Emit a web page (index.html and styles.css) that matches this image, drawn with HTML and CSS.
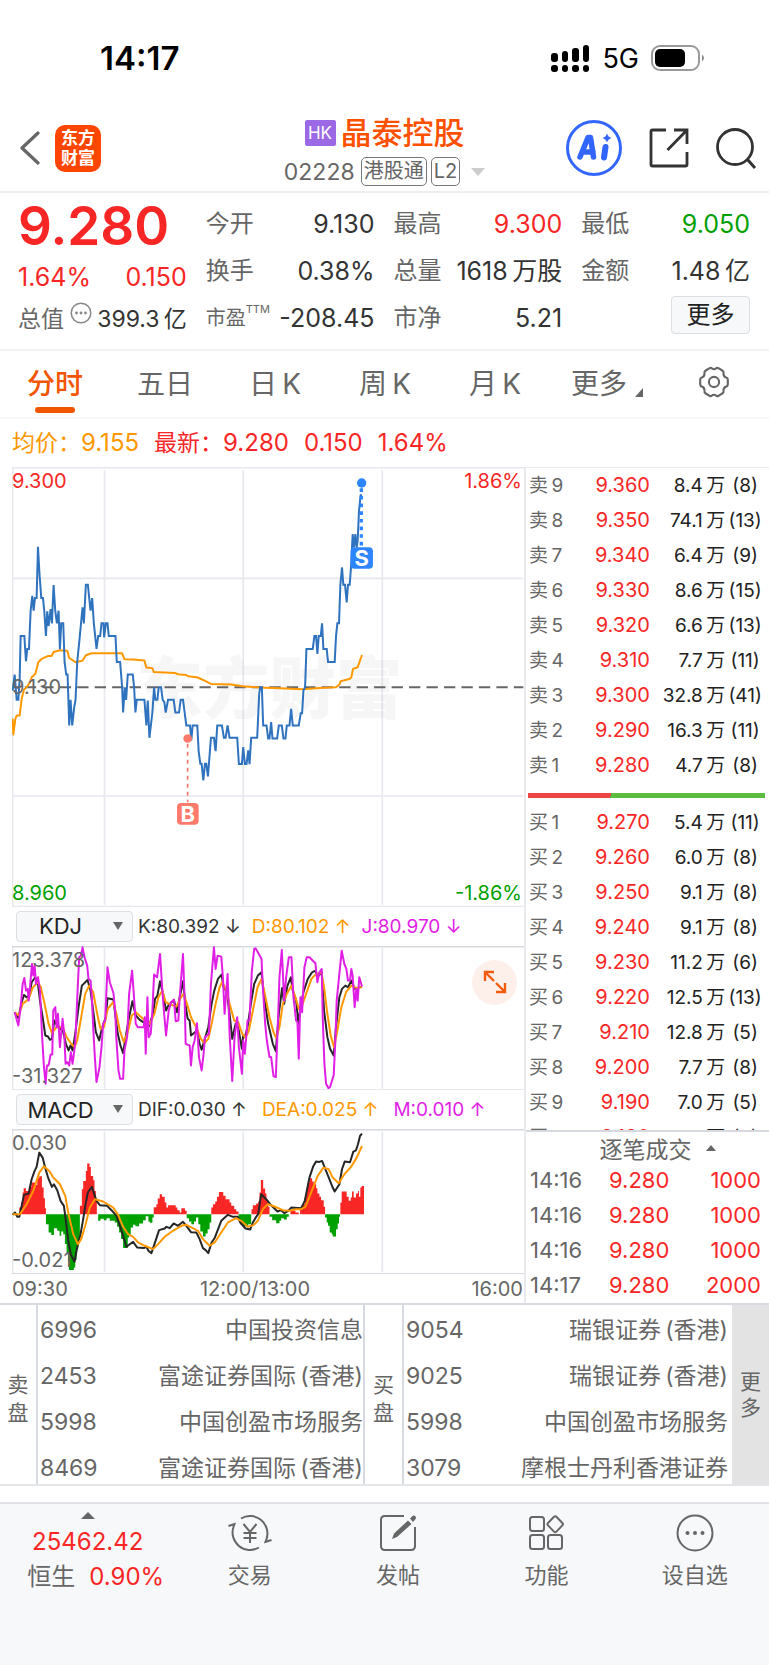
FILE: index.html
```html
<!DOCTYPE html>
<html lang="zh-CN">
<head>
<meta charset="utf-8">
<meta name="viewport" content="width=device-width, initial-scale=1">
<title>晶泰控股 02228</title>
<link rel="stylesheet" href="styles.css">
</head>
<body>
<div class="status">
  <span class="clock">14:17</span>
  <div class="status-right">
    <svg width="39" height="28" viewBox="0 0 39 28" aria-hidden="true"><g fill="#000"><rect x="0" y="9" width="7" height="9" rx="3"/><rect x="11" y="7" width="6" height="11" rx="3"/><rect x="21" y="4" width="7" height="14" rx="3"/><rect x="32" y="1" width="6" height="17" rx="3"/><rect x="0" y="21" width="7" height="7" rx="3"/><rect x="11" y="21" width="6" height="7" rx="3"/><rect x="21" y="21" width="7" height="7" rx="3"/><rect x="32" y="21" width="6" height="7" rx="3"/></g></svg>
    <span class="net">5G</span>
    <svg width="54" height="26" viewBox="0 0 54 26" aria-hidden="true"><rect x="1" y="1" width="47" height="24" rx="8" fill="none" stroke="#999" stroke-width="2"/><rect x="4" y="4" width="30" height="18" rx="5" fill="#000"/><path d="M51 9.500q4 3.500 0 7z" fill="#888"/></svg>
  </div>
</div>

<header class="head">
  <div class="head-left">
    <button class="icon-btn" aria-label="返回"><svg width="20" height="34" viewBox="0 0 20 34"><path d="M18 2 2 17l16 15" fill="none" stroke="#666" stroke-width="3.200" stroke-linecap="round" stroke-linejoin="round"/></svg></button>
    <div class="logo"><span>东方</span><span>财富</span></div>
  </div>
  <div class="title">
    <div class="title-row"><span class="hk">HK</span><h1>晶泰控股</h1></div>
    <button class="code-row"><span class="code">02228</span><span class="tag">港股通</span><span class="tag">L2</span><svg width="14" height="8" viewBox="0 0 14 8"><path d="M0 0h14L7 8z" fill="#ccc"/></svg></button>
  </div>
  <div class="head-right">
    <button class="icon-btn" aria-label="AI"><svg width="56" height="56" viewBox="0 0 56 56"><circle cx="28" cy="28" r="26.500" fill="none" stroke="#3366ff" stroke-width="3"/><g fill="none" stroke="#3366ff" stroke-linecap="round" stroke-linejoin="round"><path d="M14 37 22 17.500h2.500l3 19.500M17 32h10" stroke-width="5.500"/><path d="M39.500 27 38 37.500" stroke-width="6"/></g><path d="M41 13.500q1 3.500 4.500 4.500-3.500 1-4.500 4.500-1-3.500-4.500-4.500 3.500-1 4.500-4.500z" fill="#3366ff"/></svg></button>
    <button class="icon-btn" aria-label="分享"><svg width="40" height="40" viewBox="0 0 40 40"><path d="M17 2H3.500Q2 2 2 3.500v33Q2 38 3.500 38h33q1.500 0 1.500-1.500V24M25 2h13v14M38 2 18.500 22" fill="none" stroke="#333" stroke-width="2.800"/></svg></button>
    <button class="icon-btn" aria-label="搜索"><svg width="41" height="41" viewBox="0 0 41 41"><circle cx="19" cy="19" r="17.500" fill="none" stroke="#333" stroke-width="2.800"/><path d="m31 31 8 9" stroke="#333" stroke-width="3"/></svg></button>
  </div>
</header>

<section class="quote">
  <div class="now">
    <div class="price">9.280</div>
    <div class="pair chg"><span>1.64%</span><span>0.150</span></div>
    <div class="pair cap"><span class="lab">总值</span><svg width="22" height="22" viewBox="0 0 22 22"><circle cx="11" cy="11" r="9.800" fill="none" stroke="#888" stroke-width="1.500"/><g fill="#888"><circle cx="6.500" cy="11" r="1.400"/><circle cx="11" cy="11" r="1.400"/><circle cx="15.500" cy="11" r="1.400"/></g></svg><span class="val">399.3&#8201;亿</span></div>
  </div>
  <dl class="stats">
    <div><dt>今开</dt><dd>9.130</dd></div>
    <div><dt>换手</dt><dd>0.38%</dd></div>
    <div><dt class="small">市盈<sup>TTM</sup></dt><dd>-208.45</dd></div>
  </dl>
  <dl class="stats">
    <div><dt>最高</dt><dd class="up">9.300</dd></div>
    <div><dt>总量</dt><dd>1618&#8201;万股</dd></div>
    <div><dt>市净</dt><dd>5.21</dd></div>
  </dl>
  <div class="stats">
    <dl>
      <div><dt>最低</dt><dd class="down">9.050</dd></div>
      <div><dt>金额</dt><dd>1.48&#8201;亿</dd></div>
    </dl>
    <div class="more-row"><button class="more">更多</button></div>
  </div>
</section>

<nav class="tabs">
  <button class="tab on">分时</button>
  <button class="tab">五日</button>
  <button class="tab">日&#8201;K</button>
  <button class="tab">周&#8201;K</button>
  <button class="tab">月&#8201;K</button>
  <button class="tab wide">更多<svg width="8" height="9" viewBox="0 0 8 9"><path d="M8 0v9H0z" fill="#666"/></svg></button>
  <button class="tab" aria-label="设置"><svg width="34" height="34" viewBox="0 0 32 32"><g fill="none" stroke="#666" stroke-width="2"><path d="M11.500 3.200Q13 2 14 3.200q2 1.600 4 0 1-1.200 2.500 0l3.300 2q1.500.9 1.200 2.600-.3 2.600 2 3.700 2 .7 2 2.200v4.600q0 1.500-2 2.200-2.300 1.100-2 3.700.3 1.700-1.200 2.600l-3.300 2q-1.500 1.200-2.500 0-2-1.600-4 0-1 1.200-2.500 0l-3.300-2Q6.700 25.900 7 24.200q.3-2.600-2-3.700-2-.7-2-2.200v-4.600q0-1.500 2-2.200 2.300-1.100 2-3.700-.3-1.700 1.200-2.600z"/><circle cx="16" cy="16" r="4.800"/></g></svg></button>
</nav>

<div class="legend"><span class="avg">均价：<b>9.155</b></span><span>最新：<b>9.280</b></span><b>0.150</b><b>1.64%</b></div>

<main class="board">
  <div class="charts">
    <div class="chart">
      <svg viewBox="36 18 1539 1322" role="img" aria-label="分时走势">
        <g fill="none" stroke="#e6e8ee" stroke-width="5"><path d="M36 20H1575M36 1339H1575M38 20V1339"/><path d="M38 353H1573M38 1007H1573M314 28V1334M731 28V1334M1149 28V1334"/></g>
        <text class="mark" x="410" y="758">东方财富</text>
        <path d="M38 680H1573" stroke="#666" stroke-width="6" stroke-dasharray="34 18.500" stroke-dashoffset="16" fill="none"/>
        <polyline fill="none" stroke="#ff9800" stroke-width="6" stroke-linejoin="round" points="38,775 40,822 46,775 50,765 59,765 65,715 72,687 80,680 90,665 95,650 106,640 115,605 125,595 145,586 155,586 161,574 180,569 202,570 208,592 220,600 227,605 248,600 258,584 275,578 367,578 374,596 400,597 434,600 440,621 458,623 462,634 525,637 535,641 560,643 565,647 592,650 615,660 634,670 695,672 730,677 780,681 860,684 910,686 960,682 1010,680 1020,672 1024,662 1050,655 1056,650 1061,625 1075,620 1088,583"/>
        <polyline fill="none" stroke="#2f73bf" stroke-width="6" points="38,690 44,642 50,718 55,718 59,655 62,526 73,526 78,602 82,565 87,565 92,450 97,405 101,450 105,412 110,412 114,258 119,345 124,412 129,412 133,450 138,526 142,452 146,496 152,445 156,488 161,373 166,450 171,488 176,450 180,566 184,488 190,488 194,604 199,642 203,642 208,795 212,718 217,795 223,740 227,718 232,604 238,545 248,440 252,488 258,372 264,372 272,450 277,412 282,488 290,565 295,526 301,526 305,488 311,488 313,530 318,488 323,488 327,526 347,526 351,604 361,604 367,680 370,756 375,680 379,718 384,642 399,642 403,680 407,756 411,718 434,718 440,795 444,720 449,832 458,756 463,680 467,718 473,718 477,680 484,680 489,718 494,725 498,756 505,718 522,718 527,756 538,756 543,718 550,718 560,795 571,795 575,840 579,795 593,795 597,872 602,910 606,910 611,960 616,910 620,910 625,948 634,832 643,832 648,872 653,795 667,795 673,832 678,832 684,795 690,832 713,832 718,911 727,911 731,860 736,911 741,911 746,870 750,911 755,832 773,832 779,700 782,680 787,680 791,795 801,795 806,834 810,834 815,785 819,834 833,834 838,795 847,795 852,834 858,834 862,795 870,795 875,745 880,795 898,795 904,758 908,758 912,690 917,680 921,565 940,565 945,526 950,526 954,580 958,526 964,526 968,488 972,565 982,565 986,604 1006,604 1010,526 1014,488 1019,488 1023,372 1028,320 1032,372 1037,372 1042,425 1046,372 1051,372 1055,320 1060,220 1064,260 1068,220 1072,260 1075,240 1079,150 1084,103 1088,103"/>
        <path d="M564 850V1026" stroke="#ff7a6b" stroke-width="5" stroke-dasharray="12 12"/>
        <circle cx="564" cy="834" r="13" fill="#ff7a6b"/>
        <rect x="532" y="1028" width="65" height="65" rx="12" fill="#ff7a6b"/>
        <text class="pin" x="564.500" y="1084">B</text>
        <path d="M1086 82V258" stroke="#2d86ff" stroke-width="10" stroke-dasharray="11 12"/>
        <circle cx="1087" cy="66" r="14" fill="#2d86ff"/>
        <rect x="1054" y="259" width="67" height="65" rx="12" fill="#2d86ff"/>
        <text class="pin" x="1087.500" y="315">S</text>
      </svg>
      <span class="scale tl up">9.300</span><span class="scale tr up">1.86%</span>
      <span class="scale ml">9.130</span>
      <span class="scale bl down">8.960</span><span class="scale br down">-1.86%</span>
    </div>
    <div class="ind">
      <span class="pick"><select aria-label="指标一"><option>KDJ</option></select><svg width="10" height="8" viewBox="0 0 10 8"><path d="M0 0h10L5 8z" fill="#666"/></svg></span>
      <div class="vals"><span>K:80.392 ↓</span><span class="c-o">D:80.102 ↑</span><span class="c-m">J:80.970 ↓</span></div>
    </div>
    <div class="chart">
      <svg viewBox="36 136 1539 434" role="img" aria-label="KDJ">
        <g fill="none" stroke="#e6e8ee" stroke-width="5"><path d="M36 568H1575M38 138V568M314 142V565M731 142V565M1149 142V565"/><path d="M36 138H1575" stroke="#d6d9e0"/></g>
        <g fill="none" stroke-width="6" stroke-linejoin="round">
        <polyline stroke="#262626" points="44,335 55,352 65,305 72,283 80,290 88,285 95,245 106,230 114,250 120,300 128,350 136,405 144,408 150,418 156,415 163,360 170,372 178,380 190,395 198,430 206,450 212,435 218,450 226,400 236,320 246,255 263,238 272,270 280,330 288,395 298,420 306,385 318,350 323,293 341,297 346,340 354,400 362,435 370,458 376,420 388,350 398,302 408,345 420,358 435,368 447,378 460,340 466,295 473,285 481,242 490,280 499,330 507,312 523,300 532,335 540,290 550,242 557,310 564,355 570,360 574,405 592,390 600,430 606,448 614,420 626,380 636,310 644,270 655,235 666,222 672,260 682,275 690,340 698,415 708,370 716,380 727,445 731,405 736,410 744,380 754,310 764,250 775,225 786,215 794,290 806,370 820,430 829,452 838,340 848,262 854,310 864,255 874,230 880,270 890,300 897,370 903,320 912,275 925,235 938,215 948,210 955,228 967,215 974,330 984,410 992,445 1003,465 1010,380 1020,290 1028,265 1038,255 1046,260 1056,240 1066,265 1088,258"/>
        <polyline stroke="#ff9800" points="44,335 56,345 68,310 86,295 98,262 112,245 122,258 134,310 146,370 156,398 170,380 188,380 200,410 214,430 224,440 232,420 244,350 256,280 268,255 280,275 292,340 302,385 312,380 324,325 340,305 350,340 360,390 372,425 384,395 396,345 408,335 430,355 450,370 464,340 476,290 488,270 498,305 512,312 530,318 544,290 552,280 562,310 574,350 592,385 604,415 614,428 626,415 636,370 648,310 660,260 668,243 680,270 690,310 704,360 716,365 728,400 738,412 748,390 760,330 774,260 786,235 796,280 810,350 822,395 830,412 840,380 850,310 862,280 876,255 888,290 898,325 908,315 920,280 936,235 948,222 966,215 974,260 984,340 994,405 1004,440 1014,390 1026,320 1040,275 1056,255 1070,262 1088,260"/>
        <polyline stroke="#e01ee6" points="44,335 55,375 62,320 68,250 73,232 78,270 83,265 86,300 90,260 96,190 100,225 104,195 108,250 114,230 120,270 126,400 132,500 137,550 141,495 146,495 152,462 157,462 160,330 166,320 170,380 174,340 180,440 188,355 193,400 197,490 202,485 208,495 213,455 218,490 226,430 234,250 238,170 243,165 248,140 254,170 262,195 266,235 272,240 276,290 280,380 285,470 290,545 299,500 305,440 310,370 316,360 323,200 330,245 341,278 346,330 350,420 356,510 361,535 370,535 374,450 382,410 388,280 397,210 402,280 408,370 414,380 432,380 435,350 438,460 443,290 447,410 453,400 458,330 463,222 472,230 481,160 486,240 490,300 499,405 507,330 514,305 523,297 528,362 536,360 540,290 550,160 555,300 558,430 570,435 574,495 579,440 585,420 592,368 598,470 606,510 612,460 616,410 628,400 634,250 643,140 648,205 654,165 665,168 670,230 675,340 684,220 690,400 698,542 705,410 713,350 718,440 727,520 731,420 736,460 744,360 750,360 757,210 764,145 768,143 775,155 786,175 790,260 797,370 802,420 810,470 815,470 822,527 829,530 834,400 840,230 847,148 854,300 860,230 868,170 876,170 882,290 890,360 894,365 898,475 903,290 908,335 915,200 922,170 930,170 948,188 954,245 960,215 967,205 970,350 975,490 980,550 987,563 992,560 1003,525 1008,420 1012,300 1018,240 1027,150 1035,190 1041,205 1046,240 1052,240 1056,205 1060,225 1066,320 1071,265 1075,300 1080,230 1088,258"/>
        </g>
      </svg>
      <span class="scale tl">123.378</span><span class="scale bl">-31.327</span>
      <button class="expand" aria-label="全屏"><svg width="24" height="24" viewBox="0 0 24 24"><path d="M11 2H2v9M2 2l9 9M22 13v9h-9M22 22l-9-9" fill="none" stroke="#f25c10" stroke-width="2.400"/></svg></button>
    </div>
    <div class="ind">
      <span class="pick"><select aria-label="指标二"><option>MACD</option></select><svg width="10" height="8" viewBox="0 0 10 8"><path d="M0 0h10L5 8z" fill="#666"/></svg></span>
      <div class="vals loose"><span>DIF:0.030 ↑</span><span class="c-o">DEA:0.025 ↑</span><span class="c-m">M:0.010 ↑</span></div>
    </div>
    <div class="chart">
      <svg viewBox="36 114 1539 436" role="img" aria-label="MACD">
        <g fill="none" stroke="#e6e8ee" stroke-width="5"><path d="M38 116V548M314 122V543M731 122V543M1149 122V543"/><path d="M36 116H1575M36 549H1575" stroke="#d6d9e0"/></g>
        <path class="bar-up" d="M58 370V350H63V335H68V305H71V292H78V300H88V288H94V275H108V282H112V262H118V256H126V290H131V322H135V352H138V370ZM240 370V345H246V295H250V270H258V240H262V218H269V228H273V255H280V268H284V300H288V330H291V370ZM462 370V349H470V340H474V323H480V310H487V318H495V335H500V350H505V343H528V350H533V358H540V365H545V352H556V360H561V370ZM635 370V350H640V340H647V332H652V318H658V303H671V315H678V325H690V335H695V345H704V355H710V362H717V370ZM756 370V355H760V343H770V338H776V332H780V305H784V267H791V293H797V308H801V330H806V348H810V370ZM873 370V360H888V365H898V370ZM902 370V350H908V340H916V320H920V298H925V275H930V262H938V272H943V280H950V292H954V308H960V318H965V328H973V348H977V370ZM1023 370V335H1027V302H1042V318H1048V330H1054V320H1058V302H1063V320H1070V308H1076V300H1079V318H1083V290H1087V285H1094V370Z"/>
        <path class="bar-dn" d="M138 370V400H146V425H154V433H162V412H172V420H179V435H184V422H190V430H195V460H200V488H205V510H207V538H222V530H226V508H230V475H235V450H240V370ZM295 370V390H302V384H312V388H320V382H330V390H345V395H352V408H358V425H364V445H370V472H384V440H388V430H393V410H400V402H407V406H418V398H430V388H438V376H446V392H450V396H458V380H462V370ZM561 370V382H568V392H575V400H583V392H589V380H596V400H602V422H610V437H618V428H624V415H630V395H635V370ZM717 370V388H722V400H728V406H746V400H755V370ZM810 370V378H818V388H830V397H840V390H845V382H853V386H862V378H868V370ZM977 370V380H982V395H986V405H991V425H997V430H1000V437H1010V415H1015V398H1019V378H1022V370Z"/>
      </svg>
      <span class="scale tl">0.030</span><span class="scale bl">-0.021</span>
      <svg class="over" viewBox="36 114 1539 436" aria-hidden="true">
        <g fill="none" stroke-width="6" stroke-linejoin="round">
        <polyline stroke="#262626" points="38,372 45,365 52,378 58,378 64,350 72,312 86,308 95,265 104,240 110,228 118,185 128,200 137,235 145,262 156,288 162,280 172,298 182,330 192,345 198,390 205,450 213,492 224,513 232,470 242,430 250,385 258,335 264,305 276,288 290,330 300,343 322,345 335,358 350,375 362,410 380,468 400,453 412,470 432,472 440,468 446,480 455,487 466,455 478,418 495,413 500,408 510,412 522,398 535,405 550,393 560,405 574,424 590,425 600,445 610,472 618,478 626,487 636,455 646,440 665,390 685,372 700,378 715,378 722,395 738,413 752,416 760,395 770,378 776,370 785,310 800,325 812,340 834,362 845,358 855,367 866,360 876,350 905,352 916,330 930,260 942,225 950,212 960,213 968,210 978,235 990,265 1000,290 1006,302 1020,280 1028,235 1036,212 1052,214 1062,182 1070,178 1076,160 1082,135 1088,128"/>
        <polyline stroke="#ff9800" points="38,370 60,370 80,340 100,300 118,245 132,226 148,240 160,260 180,280 196,315 206,370 220,430 234,460 244,445 256,405 270,350 285,325 310,332 340,350 355,372 370,408 385,430 400,438 415,455 435,465 460,475 475,460 495,438 520,420 545,405 560,402 575,410 595,420 610,445 630,465 645,455 665,425 685,395 710,382 725,390 745,408 762,403 775,390 790,355 805,340 825,347 850,358 870,360 890,355 905,355 918,348 935,305 955,255 972,230 988,235 1000,260 1018,277 1035,250 1055,228 1072,200 1088,165"/>
        </g>
      </svg>
    </div>
    <div class="axis"><span>09:30</span><span>12:00/13:00</span><span>16:00</span></div>
  </div>

  <aside class="side">
    <div class="book">
      <table>
        <tr><th>卖&#8201;9</th><td>9.360</td><td>8.4&#8201;万</td><td>(8)</td></tr>
        <tr><th>卖&#8201;8</th><td>9.350</td><td>74.1&#8201;万</td><td>(13)</td></tr>
        <tr><th>卖&#8201;7</th><td>9.340</td><td>6.4&#8201;万</td><td>(9)</td></tr>
        <tr><th>卖&#8201;6</th><td>9.330</td><td>8.6&#8201;万</td><td>(15)</td></tr>
        <tr><th>卖&#8201;5</th><td>9.320</td><td>6.6&#8201;万</td><td>(13)</td></tr>
        <tr><th>卖&#8201;4</th><td>9.310</td><td>7.7&#8201;万</td><td>(11)</td></tr>
        <tr><th>卖&#8201;3</th><td>9.300</td><td>32.8&#8201;万</td><td>(41)</td></tr>
        <tr><th>卖&#8201;2</th><td>9.290</td><td>16.3&#8201;万</td><td>(11)</td></tr>
        <tr><th>卖&#8201;1</th><td>9.280</td><td>4.7&#8201;万</td><td>(8)</td></tr>
      </table>
      <div class="ratio"></div>
      <table>
        <tr><th>买&#8201;1</th><td>9.270</td><td>5.4&#8201;万</td><td>(11)</td></tr>
        <tr><th>买&#8201;2</th><td>9.260</td><td>6.0&#8201;万</td><td>(8)</td></tr>
        <tr><th>买&#8201;3</th><td>9.250</td><td>9.1&#8201;万</td><td>(8)</td></tr>
        <tr><th>买&#8201;4</th><td>9.240</td><td>9.1&#8201;万</td><td>(8)</td></tr>
        <tr><th>买&#8201;5</th><td>9.230</td><td>11.2&#8201;万</td><td>(6)</td></tr>
        <tr><th>买&#8201;6</th><td>9.220</td><td>12.5&#8201;万</td><td>(13)</td></tr>
        <tr><th>买&#8201;7</th><td>9.210</td><td>12.8&#8201;万</td><td>(5)</td></tr>
        <tr><th>买&#8201;8</th><td>9.200</td><td>7.7&#8201;万</td><td>(8)</td></tr>
        <tr><th>买&#8201;9</th><td>9.190</td><td>7.0&#8201;万</td><td>(5)</td></tr>
        <tr><th>买10</th><td>9.180</td><td>8.8&#8201;万</td><td>(8)</td></tr>
      </table>
    </div>
    <button class="ticks-head">逐笔成交<svg width="10" height="6" viewBox="0 0 10 6"><path d="M5 0l5 6H0z" fill="#666"/></svg></button>
    <table class="ticks">
      <tr><th>14:16</th><td>9.280</td><td>1000</td></tr>
      <tr><th>14:16</th><td>9.280</td><td>1000</td></tr>
      <tr><th>14:16</th><td>9.280</td><td>1000</td></tr>
      <tr><th>14:17</th><td>9.280</td><td>2000</td></tr>
    </table>
  </aside>
</main>

<section class="brokers">
  <div class="vert">卖<br>盘</div>
  <ul>
    <li><span>6996</span><span>中国投资信息</span></li>
    <li><span>2453</span><span>富途证券国际&#8201;(香港)</span></li>
    <li><span>5998</span><span>中国创盈市场服务</span></li>
    <li><span>8469</span><span>富途证券国际&#8201;(香港)</span></li>
  </ul>
  <div class="vert">买<br>盘</div>
  <ul class="buy">
    <li><span>9054</span><span>瑞银证券&#8201;(香港)</span></li>
    <li><span>9025</span><span>瑞银证券&#8201;(香港)</span></li>
    <li><span>5998</span><span>中国创盈市场服务</span></li>
    <li><span>3079</span><span>摩根士丹利香港证券</span></li>
  </ul>
  <button class="vert all">更<br>多</button>
</section>

<nav class="bottom">
  <button class="index">
    <svg width="14" height="7" viewBox="0 0 14 7"><path d="M7 0l7 7H0z" fill="#666"/></svg>
    <span class="pts">25462.42</span>
    <span class="idx-row"><span class="nm">恒生</span><span>0.90%</span></span>
  </button>
  <button class="item"><svg width="44" height="38" viewBox="0 0 44 38"><g fill="none" stroke="#666" stroke-width="2"><path d="M13 4.500A17.500 17.500 0 0 1 38.400 25.500L37.500 28l6-2M31 33.500A17.500 17.500 0 0 1 5.600 12.500L6.500 10l-6 2"/><path d="M15.500 10l6.500 8 6.500-8M22 18v11M15.500 19h13M15.500 24h13"/></g></svg>交易</button>
  <button class="item"><svg width="38" height="38" viewBox="0 0 38 38"><path d="M25 2H6Q2 2 2 6v26q0 4 4 4h26q4 0 4-4V13" fill="none" stroke="#666" stroke-width="2"/><path d="m13 25 2-5.500L29 6.500l3.500 3.500L18 23zM31 4.500l2.500-2.500q2-1 3 .5t0 2.500L34 8z" fill="#666"/></svg>发帖</button>
  <button class="item"><svg width="36" height="38" viewBox="0 0 36 38"><g fill="none" stroke="#666" stroke-width="2"><rect x="2" y="3" width="14" height="14" rx="2.500"/><rect x="2" y="21" width="14" height="14" rx="2.500"/><rect x="20" y="21" width="14" height="14" rx="2.500"/><path d="M26 2.800q1.200-1.200 2.400 0l6 6.200q1.200 1.200 0 2.400l-6 6.200q-1.200 1.200-2.400 0l-6-6.200q-1.200-1.200 0-2.400z"/></g></svg>功能</button>
  <button class="item"><svg width="38" height="38" viewBox="0 0 38 38"><circle cx="19" cy="19" r="17.500" fill="none" stroke="#666" stroke-width="2"/><g fill="#666"><circle cx="11.500" cy="19" r="2"/><circle cx="19" cy="19" r="2"/><circle cx="26.500" cy="19" r="2"/></g></svg>设自选</button>
</nav>
</body>
</html>
```

FILE: styles.css
```css
* { box-sizing: border-box; }
body {
  margin: 0;
  min-height: 100vh;
  display: flex;
  flex-direction: column;
  background: #fff;
  color: #333;
  font-family: Inter, "Noto Sans CJK SC", sans-serif;
  font-size: 23px;
}
button, select { font: inherit; color: inherit; background: none; border: 0; padding: 0; margin: 0; }
svg { display: block; flex: none; }
h1, dl, dd, ul { margin: 0; padding: 0; }
table { width: 100%; border-collapse: collapse; table-layout: fixed; }
th, td { padding: 0; font-weight: 400; line-height: 35px; white-space: nowrap; }
.up { color: #f92626; }
.down { color: #00a000; }

.status { height: 112px; padding: 4px 64px 0 100px; display: flex; justify-content: space-between; align-items: center; color: #000; }
.clock { font-size: 33px; font-weight: 600; }
.status-right { display: flex; align-items: center; gap: 12px; }
.net { font-size: 27px; }

.head { padding: 0 12px 1px; display: grid; grid-template-columns: 1fr auto 1fr; align-items: center; border-bottom: 2px solid #eee; }
.head-left, .head-right { display: flex; align-items: center; padding-bottom: 6px; }
.head-left { gap: 15px; padding-left: 8px; }
.head-right { justify-content: flex-end; gap: 27px; }
.logo { width: 46px; height: 47px; border-radius: 10px; background: #ff4600; color: #fff; display: flex; flex-direction: column; align-items: center; justify-content: center; font-size: 17px; font-weight: 700; line-height: 20px; }
.title { display: flex; flex-direction: column; align-items: center; }
.title-row { display: flex; align-items: center; gap: 5px; height: 41px; }
.title h1 { font-size: 31px; line-height: 38px; font-weight: 500; color: #ff5000; }
.hk { width: 31px; height: 26px; border-radius: 2px; background: #9b69e6; color: #fff; font-size: 17px; line-height: 26px; text-align: center; }
.code-row { display: flex; align-items: center; gap: 4px; height: 37px; color: #666; }
.code { margin-right: 2px; }
.tag { height: 29px; padding: 0 2px; border: 1px solid #777; border-radius: 5px; font-size: 20px; line-height: 27px; }
.code-row svg { margin-left: 7px; }

.quote { padding: 7px 19px 8px 18px; display: grid; grid-template-columns: repeat(4, minmax(0, 1fr)); column-gap: 19px; border-bottom: 2px solid #f3f3f3; }
.price { font-size: 53px; line-height: 52px; font-weight: 600; color: #f92626; }
.pair { display: flex; justify-content: space-between; align-items: center; white-space: nowrap; }
.chg { height: 50px; font-size: 25px; color: #f92626; }
.cap { height: 34px; line-height: 34px; }
.cap svg { margin-bottom: 12px; }
.cap .lab { color: #666; }
.stats div { display: flex; justify-content: space-between; align-items: center; height: 47px; white-space: nowrap; }
.stats dt { color: #666; font-size: 24px; line-height: 32px; }
.stats dd { font-size: 25px; line-height: 32px; }
.stats dt.small { font-size: 20px; display: flex; }
.stats sup { font-size: 11px; line-height: 14px; }
.stats .more-row { justify-content: flex-end; align-items: flex-start; padding-top: 2px; }
.more { width: 79px; height: 38px; border: 1px solid #dcdfe6; border-radius: 4px; background: #f7f8fa; color: #222; font-size: 24px; line-height: 32px; }

.tabs { height: 68px; padding-right: 5px; display: grid; grid-template-columns: repeat(5, 110fr) 114fr 100fr; border-bottom: 2px solid #f5f5f5; color: #666; font-size: 28px; }
.tab { display: flex; justify-content: center; align-items: center; position: relative; padding-bottom: 4px; }
.tab.on { color: #f25500; font-weight: 500; }
.tab.on::after { content: ""; position: absolute; bottom: 4px; width: 40px; height: 6px; border-radius: 3px; background: #f25500; }
.tab.wide { gap: 8px; }
.tab.wide svg { margin-top: 20px; }

.legend { height: 48px; padding-left: 12px; display: flex; align-items: center; gap: 15px; color: #f92626; }
.legend span { display: flex; align-items: center; line-height: 32px; }
.legend b { font-weight: 400; font-size: 24px; line-height: 32px; }
.avg { color: #ff9800; }

.board { display: grid; grid-template-columns: 524fr 245fr; border-bottom: 2px solid #d9dbe3; }
.charts { padding-left: 12px; min-width: 0; }
.chart { position: relative; }
.chart svg { width: 100%; height: auto; }
.chart .over { position: absolute; top: 0; left: 0; }
.mark { font-size: 200px; font-weight: 900; fill: #999; opacity: .08; }
.pin { font-size: 66px; font-weight: 700; fill: #fff; text-anchor: middle; }
.bar-up { fill: #f92626; }
.bar-dn { fill: #00a000; }
.scale { position: absolute; font-size: 20px; line-height: 24px; color: #666; }
.scale.up { color: #f92626; }
.scale.down { color: #00a000; }
.tl { top: 2px; left: 0; }
.tr { top: 2px; right: 2px; }
.ml { top: 50%; left: 0; transform: translateY(-50%); }
.bl { bottom: 2px; left: 0; }
.br { bottom: 2px; right: 2px; }
.ind { height: 39px; padding-left: 4px; display: flex; align-items: center; gap: 5px; font-size: 19px; }
.pick { position: relative; flex: none; }
.pick select { appearance: none; display: block; width: 117px; height: 31px; padding: 0 28px 0 0; border: 1px solid #dcdfe6; border-radius: 4px; background: #f7f8fa; color: #222; font-size: 22px; text-align-last: center; }
.pick svg { position: absolute; right: 10px; top: 11px; width: 10px; pointer-events: none; }
.vals { display: flex; gap: 11px; white-space: nowrap; }
.vals.loose { gap: 15px; }
.c-o { color: #ff9800; }
.c-m { color: #e01ee6; }
.expand { position: absolute; top: 14px; right: 7px; width: 45px; height: 45px; border-radius: 50%; background: #fdf0ea; display: grid; place-items: center; }
.chart .expand svg { width: 24px; }
.axis { height: 29px; display: grid; grid-template-columns: 1fr auto 1fr; align-items: center; font-size: 20px; color: #666; }
.axis span:last-child { text-align: right; padding-right: 1px; }
.axis span:nth-child(2) { padding-right: 26px; }

.side { min-width: 0; border-left: 2px solid #e8eaef; display: flex; flex-direction: column; }
.book { flex: 1 1 0; min-height: 0; overflow: hidden; border-top: 1px solid #e8eaef; border-bottom: 2px solid #d6d9e0; font-size: 19px; }
.book th { width: 20%; padding-left: 3px; text-align: left; color: #666; }
.book td { width: 31%; text-align: right; color: #f92626; font-size: 20px; }
.book td:nth-child(3) { width: 31%; font-size: 19px; color: #222; }
.book td:nth-child(4) { width: 18%; padding-right: 4px; font-size: 19px; text-align: center; color: #222; }
.ratio { height: 5px; margin: 10px 4px 7px 2px; background: linear-gradient(110deg, #ef4444 35%, #5bbd40 35%); }
.ticks-head { height: 31px; display: flex; align-items: center; justify-content: center; gap: 14px; padding-left: 20px; color: #666; }
.ticks { font-size: 22px; }
.ticks th { width: 33%; padding-left: 4px; text-align: left; color: #666; }
.ticks td { text-align: right; color: #f92626; width: 26%; }
.ticks td:last-child { width: 41%; padding-right: 8px; }

.brokers { display: grid; grid-template-columns: 36fr 329fr 37fr 330fr 37fr; border-bottom: 2px solid #e3e5ea; color: #666; }
.brokers ul { list-style: none; padding: 11px 0 2px 2px; display: flex; flex-direction: column; gap: 18px; border: 0 solid #d6d9e0; border-width: 0 2px; }
.brokers ul.buy { border-right: 0; padding-right: 4px; }
.brokers li { display: flex; justify-content: space-between; line-height: 28px; white-space: nowrap; }
.vert { display: flex; align-items: center; justify-content: center; padding-top: 8px; font-size: 21px; line-height: 28px; }
.brokers .all { background: #e3e3e3; padding-top: 0; line-height: 26px; }

.bottom { flex: 1; margin-top: 16px; padding: 8px 0 0; border-top: 2px solid #e0e2e6; background: #f7f8fa; display: grid; grid-template-columns: 175fr repeat(4, 148fr); align-items: start; }
.bottom button { display: flex; flex-direction: column; align-items: center; }
.index { color: #f92626; font-size: 24px; line-height: 34px; }
.pts { margin: 6px 0 1px; }
.idx-row { display: flex; gap: 14px; padding-left: 16px; }
.nm { color: #666; }
.bottom .item { gap: 7px; padding-top: 2px; color: #666; font-size: 22px; line-height: 32px; }
```
